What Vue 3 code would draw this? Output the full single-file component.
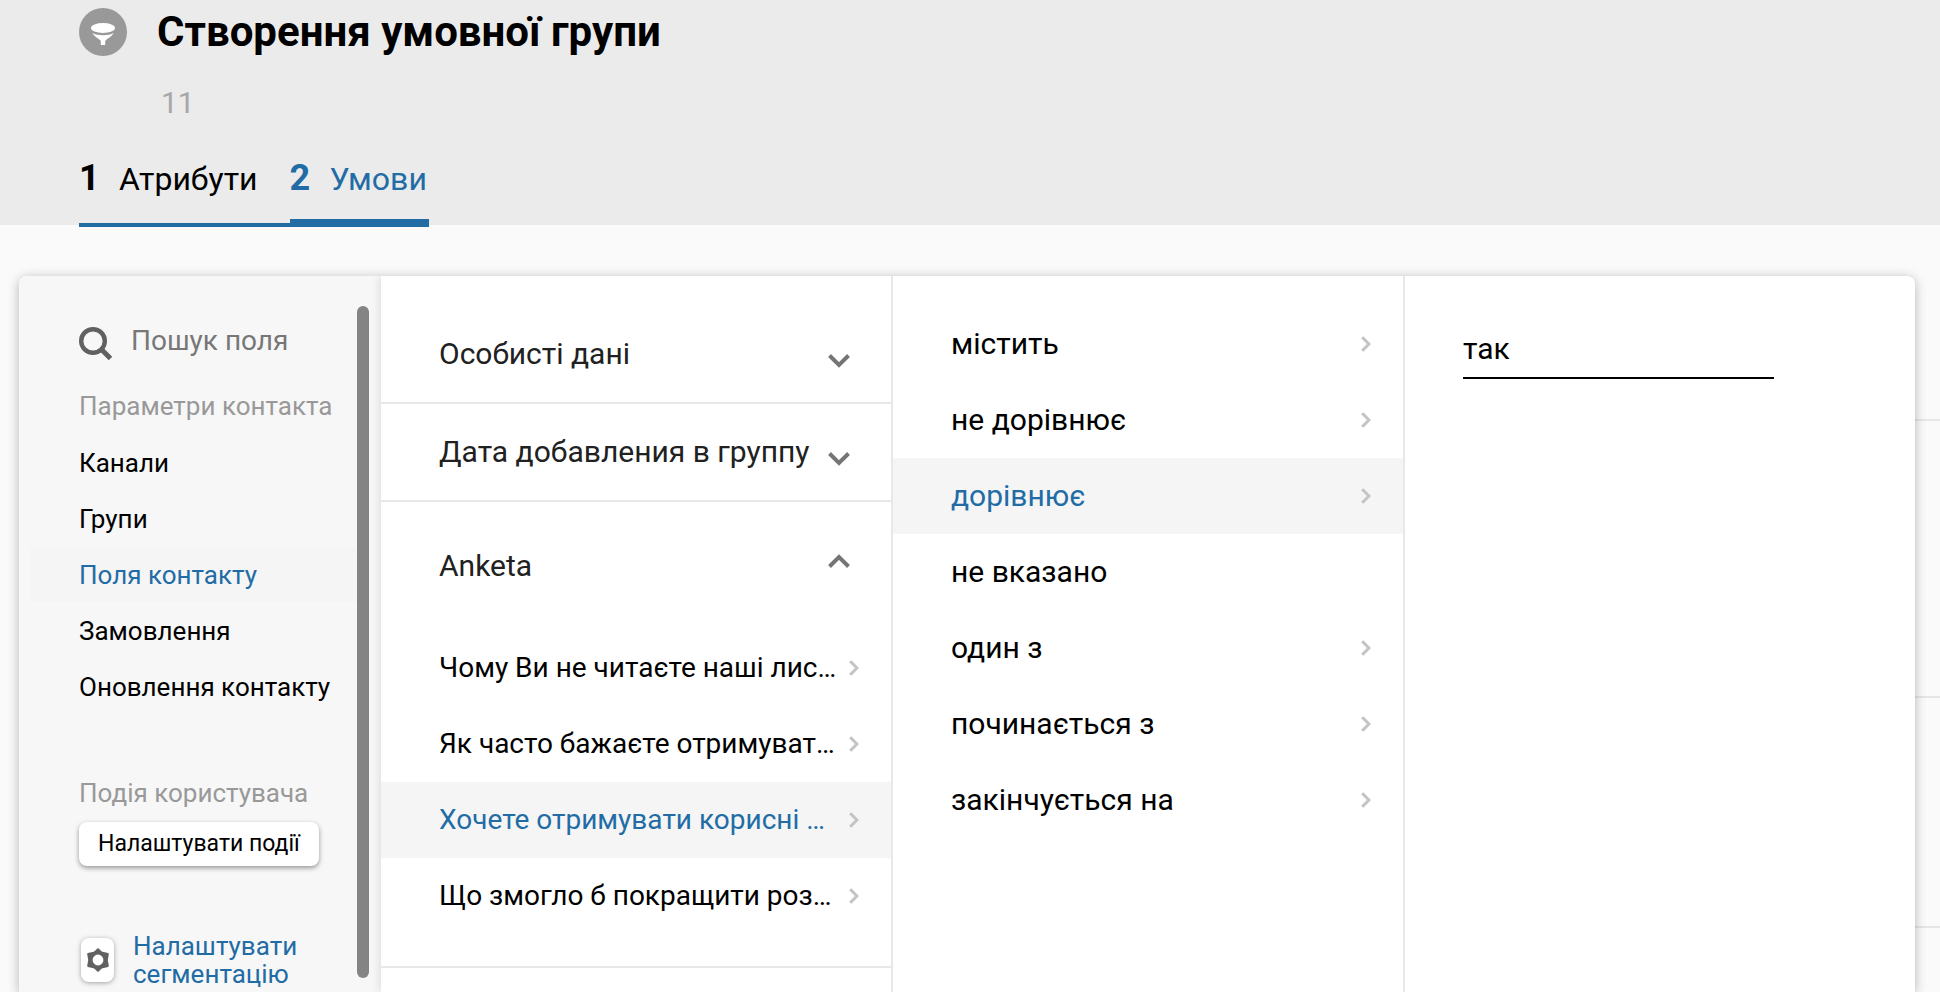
<script setup>
import { ref } from 'vue'

const contactLinks = ['Канали', 'Групи', 'Поля контакту', 'Замовлення', 'Оновлення контакту']
const activeLink = ref('Поля контакту')

const groups = [
  { name: 'Особисті дані', open: false, items: [] },
  { name: 'Дата добавления в группу', open: false, items: [] },
  {
    name: 'Anketa',
    open: true,
    items: [
      'Чому Ви не читаєте наші лис…',
      'Як часто бажаєте отримуват…',
      'Хочете отримувати корисні …',
      'Що змогло б покращити роз…'
    ]
  }
]
const activeField = ref('Хочете отримувати корисні …')

const operators = [
  { name: 'містить', next: true },
  { name: 'не дорівнює', next: true },
  { name: 'дорівнює', next: true },
  { name: 'не вказано', next: false },
  { name: 'один з', next: true },
  { name: 'починається з', next: true },
  { name: 'закінчується на', next: true }
]
const activeOperator = ref('дорівнює')
const value = ref('так')
</script>

<template>
  <div class="page">
    <header class="header">
      <div class="heading">
        <svg class="badge" viewBox="0 0 48 48" aria-hidden="true">
          <circle cx="24" cy="24" r="24" fill="#999" />
          <ellipse cx="24" cy="20" rx="12" ry="5" fill="#fff" />
          <path d="M13.5 25 C18 28 30 28 34.5 25 C33 28.5 28 30.5 26.2 33 V37 H21.8 V33 C20 30.5 15 28.5 13.5 25Z" fill="#fff" />
        </svg>
        <h1>Створення умовної групи</h1>
      </div>
      <p class="count">11</p>
      <nav class="steps">
        <a class="step" href="#attributes"><b>1</b><span>Атрибути</span></a>
        <a class="step current" href="#conditions"><b>2</b><span>Умови</span></a>
      </nav>
    </header>

    <main class="main">
      <div class="backdrop" aria-hidden="true">
        <div class="band first"></div>
        <div class="band second"></div>
        <div class="band third"></div>
      </div>

      <section class="panel">
        <aside class="sidebar">
          <div class="side-content">
            <label class="search">
              <svg viewBox="0 0 34 34" aria-hidden="true">
                <circle cx="14" cy="14" r="11.8" fill="none" stroke="#616161" stroke-width="4.4" />
                <path d="M22 22 L31.5 31.5" stroke="#616161" stroke-width="5" />
              </svg>
              <input type="search" placeholder="Пошук поля" aria-label="Пошук поля" />
            </label>
            <h2>Параметри контакта</h2>
            <nav class="links">
              <a
                v-for="link in contactLinks"
                :key="link"
                href="#"
                :class="{ active: link === activeLink }"
                @click.prevent="activeLink = link"
              >{{ link }}</a>
            </nav>
            <h2 class="events-title">Подія користувача</h2>
            <button class="events" type="button">Налаштувати події</button>
            <a class="segmentation" href="#segmentation">
              <span class="gear">
                <svg viewBox="0 0 22 24" aria-hidden="true">
                  <path
                    fill="#616161"
                    stroke="#616161"
                    stroke-width="2"
                    stroke-linejoin="round"
                    fill-rule="evenodd"
                    d="M11 1.2 L14.4 4.4 L20.8 6 L19.8 12 L20.8 18 L14.4 19.6 L11 22.8 L7.6 19.6 L1.2 18 L2.2 12 L1.2 6 L7.6 4.4Z M11 5.6 A6.4 6.4 0 1 0 11 18.4 A6.4 6.4 0 1 0 11 5.6Z"
                  />
                </svg>
              </span>
              <span>Налаштувати сегментацію</span>
            </a>
          </div>
          <div class="scrollbar" aria-hidden="true"></div>
        </aside>

        <div class="column fields">
          <div v-for="group in groups" :key="group.name" class="group" :class="{ open: group.open }">
            <button class="group-head" type="button" :aria-expanded="group.open">
              <span>{{ group.name }}</span>
              <svg viewBox="0 0 22 14" aria-hidden="true">
                <path
                  :d="group.open ? 'M1.5 12.5 L11 3 L20.5 12.5' : 'M1.5 1.5 L11 11 L20.5 1.5'"
                  fill="none" stroke="#757575" stroke-width="4"
                />
              </svg>
            </button>
            <button
              v-for="item in group.items"
              :key="item"
              class="row"
              type="button"
              :class="{ active: item === activeField }"
              @click="activeField = item"
            >
              <span>{{ item }}</span>
              <svg viewBox="0 0 10 16" aria-hidden="true">
                <path d="M1.2 1.2 L8 8 L1.2 14.8" fill="none" stroke="#c4c4c4" stroke-width="3" />
              </svg>
            </button>
          </div>
        </div>

        <div class="column operators">
          <button
            v-for="operator in operators"
            :key="operator.name"
            class="row"
            type="button"
            :class="{ active: operator.name === activeOperator }"
            @click="activeOperator = operator.name"
          >
            <span>{{ operator.name }}</span>
            <svg v-if="operator.next" viewBox="0 0 10 16" aria-hidden="true">
              <path d="M1.2 1.2 L8 8 L1.2 14.8" fill="none" stroke="#c4c4c4" stroke-width="3" />
            </svg>
          </button>
        </div>

        <div class="column value">
          <input v-model="value" type="text" aria-label="Значення" />
        </div>
      </section>
    </main>
  </div>
</template>

<style>
body {
  margin: 0;
  background: #fafafa;
}
</style>

<style scoped>
.page {
  height: 100vh;
  overflow: hidden;
  display: flex;
  flex-direction: column;
  font-family: Roboto, "Open Sans", sans-serif;
  color: #000;
}

.page * {
  box-sizing: border-box;
}

button,
input {
  font: inherit;
  color: inherit;
  border: 0;
  padding: 0;
  background: none;
  border-radius: 0;
  outline: none;
}

a {
  color: inherit;
  text-decoration: none;
}

svg {
  display: block;
  flex: none;
}

.header {
  flex: none;
  padding: 8px 79px 0;
  background: #ebebeb;
}

.heading {
  display: flex;
  align-items: center;
  gap: 30px;
  height: 48px;
}

.badge {
  width: 48px;
  height: 48px;
}

h1 {
  margin: 0;
  font-size: 42px;
  line-height: 48px;
  font-weight: 700;
}

.count {
  margin: 26px 0 0 82px;
  font-size: 30px;
  line-height: 42px;
  color: #a6a6a6;
}

.steps {
  display: flex;
  width: max-content;
  height: 103px;
  margin-bottom: -2px;
  position: relative;
  border-bottom: 4px solid #226ca6;
}

.step {
  display: flex;
  align-items: baseline;
  padding: 33px 32px 0 0;
  font-size: 32px;
  line-height: 42px;
}

.step b {
  width: 40px;
  font-size: 36px;
}

.step.current {
  padding-right: 2px;
  color: #226ca6;
  border-bottom: 4px solid #226ca6;
}

.main {
  position: relative;
  flex: 1;
  min-height: 0;
}

.backdrop {
  margin-left: 50%;
}

.band {
  border-bottom: 2px solid #e6e6e6;
}

.first {
  height: 196px;
}

.second {
  height: 277px;
}

.third {
  height: 230px;
}

.panel {
  position: absolute;
  top: 51px;
  left: 19px;
  right: 25px;
  bottom: 0;
  display: flex;
  border-radius: 8px 8px 0 0;
  background: #fff;
  box-shadow: 0 2px 12px rgba(0, 0, 0, 0.28);
}

.sidebar {
  flex: none;
  width: 362px;
  display: flex;
  align-items: flex-start;
  padding: 30px 12px 0 11px;
  border-radius: 8px 0 0 0;
  background: #f7f7f7;
}

.side-content {
  flex: 1;
  min-width: 0;
  padding-left: 49px;
}

.search {
  display: flex;
  align-items: center;
  gap: 18px;
  height: 68px;
}

.search svg {
  width: 34px;
  height: 34px;
  margin-top: 8px;
}

.search input {
  flex: 1;
  min-width: 0;
  font-size: 28px;
}

.search input::placeholder {
  color: #777;
  opacity: 1;
}

h2 {
  margin: 0;
  font-size: 26px;
  line-height: 32px;
  font-weight: 400;
  white-space: nowrap;
  color: #999;
}

.search + h2 {
  margin-top: 16px;
}

.links {
  display: flex;
  flex-direction: column;
  gap: 2px;
  margin: 14px 0 0 -49px;
}

.links a {
  padding-left: 49px;
  font-size: 26px;
  line-height: 54px;
  white-space: nowrap;
}

.links a.active {
  background: #f5f5f5;
  color: #226ca6;
}

.events-title {
  margin-top: 63px;
}

.events {
  height: 44px;
  margin-top: 13px;
  padding: 0 19px;
  border-radius: 8px;
  background: #fff;
  font-size: 23px;
  line-height: 28px;
  white-space: nowrap;
  box-shadow: 0 2px 5px rgba(0, 0, 0, 0.4);
}

.segmentation {
  display: flex;
  align-items: center;
  gap: 19px;
  margin-top: 66px;
  padding-left: 2px;
  font-size: 26px;
  line-height: 28px;
  color: #226ca6;
}

.gear {
  flex: none;
  display: grid;
  place-items: center;
  width: 33px;
  height: 44px;
  border-radius: 8px;
  background: #fff;
  box-shadow: 0 1px 5px rgba(0, 0, 0, 0.35);
}

.gear svg {
  width: 22px;
  height: 24px;
}

.scrollbar {
  flex: none;
  width: 12px;
  height: 672px;
  border-radius: 6px;
  background: #848484;
}

.page .column {
  box-sizing: content-box;
  flex: 1 1 0;
  min-width: 0;
  padding-top: 30px;
  border-right: 2px solid #e8e8e8;
}

.fields {
  box-shadow: 0 0 10px rgba(0, 0, 0, 0.14);
  clip-path: inset(0 0 0 -12px);
}

.group {
  border-bottom: 2px solid #e8e8e8;
}

.group.open {
  padding-bottom: 32px;
}

.group-head {
  display: flex;
  align-items: center;
  justify-content: space-between;
  width: 100%;
  height: 96px;
  padding: 0 41px 2px 58px;
  font-size: 30px;
  text-align: left;
  white-space: nowrap;
  color: #212121;
}

.group-head svg {
  width: 22px;
  height: 14px;
  margin-top: 16px;
}

.open .group-head {
  height: 128px;
}

.open .group-head svg {
  margin: 0 0 8px;
}

.row {
  display: flex;
  align-items: center;
  justify-content: space-between;
  width: 100%;
  height: 76px;
  padding: 0 32px 2px 58px;
  font-size: 30px;
  text-align: left;
  white-space: nowrap;
}

.fields .row {
  font-size: 28px;
}

.row svg {
  width: 10px;
  height: 16px;
  margin-top: 2px;
}

.row.active {
  background: #f5f5f5;
  color: #226ca6;
}

.page .value {
  box-sizing: border-box;
  flex: 0 0 auto;
  width: calc((100% - 366px) / 3);
  padding: 43px 58px 0;
  border-right: 0;
}

.value input {
  width: 79%;
  height: 60px;
  font-size: 30px;
  border-bottom: 2px solid #000;
}
</style>
